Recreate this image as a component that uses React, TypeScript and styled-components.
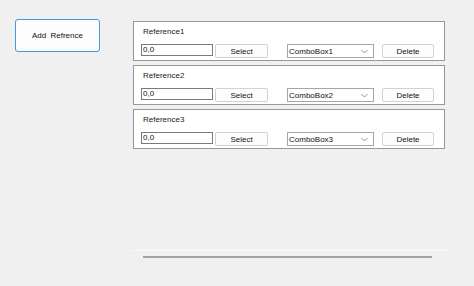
import React from "react";
import styled, { createGlobalStyle } from "styled-components";

const Global = createGlobalStyle`
  html, body { margin: 0; padding: 0; background: #f0f0f0; }
  body { font-family: "Liberation Sans", Arial, sans-serif; font-size: 8px; color: #000; }
`;

const Page = styled.div`
  width: 474px;
  height: 286px;
  display: flex;
  align-items: flex-start;
  background: #f0f0f0;
  overflow: hidden;
`;

const Side = styled.div`
  padding: 19px 0 0 15px;
  width: 118px;
  flex: none;
`;

const AddButton = styled.div`
  width: 85px;
  height: 33px;
  box-sizing: border-box;
  border: 1px solid rgb(70, 150, 220);
  border-radius: 3px;
  background: #fdfdfd;
  display: flex;
  align-items: center;
  justify-content: center;
  font-size: 8px;
  color: #111;
  word-spacing: 2px;
`;

const Main = styled.div`
  display: flex;
  flex-direction: column;
  padding-top: 21px;
`;

const Panels = styled.div`
  display: flex;
  flex-direction: column;
  gap: 4px;
`;

const Panel = styled.div`
  width: 312px;
  height: 40px;
  box-sizing: border-box;
  border: 1px solid #979797;
  background: #ffffff;
  padding: 5px 0 0 7px;
  display: flex;
  flex-direction: column;
`;

const Label = styled.div`
  height: 10px;
  line-height: 10px;
  padding-left: 2px;
  color: #222;
`;

const Row = styled.div`
  display: flex;
  align-items: flex-start;
  margin-top: 7px;
`;

const TextBox = styled.div`
  width: 72px;
  height: 12px;
  box-sizing: border-box;
  border: 1px solid #7a7a7a;
  background: #fff;
  line-height: 10px;
  padding-left: 1px;
  color: #111;
`;

const Btn = styled.div<{ $w: number; $ml: number }>`
  width: ${(p) => p.$w}px;
  height: 14px;
  margin-left: ${(p) => p.$ml}px;
  box-sizing: border-box;
  border: 1px solid #d2d2d2;
  border-radius: 2px;
  background: #fdfdfd;
  display: flex;
  align-items: center;
  justify-content: center;
  padding-top: 1px;
  color: #111;
`;

const Combo = styled.div`
  width: 87px;
  height: 14px;
  margin-left: 19px;
  box-sizing: border-box;
  border: 1px solid #a6a6a6;
  background: #fff;
  display: flex;
  align-items: center;
  justify-content: space-between;
  padding: 0 5px 0 1px;
  color: #111;
`;

const Chevron = styled.svg`
  width: 7px;
  height: 5px;
`;

const Divider = styled.div`
  margin-top: 101px;
  margin-left: -2px;
  width: 317px;
  height: 1px;
  background: #fafafa;
`;

const Rule = styled.div`
  margin-top: 5px;
  margin-left: 10px;
  width: 289px;
  height: 2px;
  background: #a3a3a3;
`;

const rows = [1, 2, 3];

export default function App() {
  return (
    <Page>
      <Global />
      <Side>
        <AddButton role="button">Add Refrence</AddButton>
      </Side>
      <Main>
        <Panels>
          {rows.map((n) => (
            <Panel key={n}>
              <Label>Reference{n}</Label>
              <Row>
                <TextBox>0,0</TextBox>
                <Btn $w={53} $ml={2}>Select</Btn>
                <Combo>
                  <span>ComboBox{n}</span>
                  <Chevron viewBox="0 0 7 5">
                    <path d="M0.5 1 L3.5 4 L6.5 1" fill="none" stroke="#8a8a8a" strokeWidth="0.9" />
                  </Chevron>
                </Combo>
                <Btn $w={52} $ml={8}>Delete</Btn>
              </Row>
            </Panel>
          ))}
        </Panels>
        <Divider />
        <Rule />
      </Main>
    </Page>
  );
}
